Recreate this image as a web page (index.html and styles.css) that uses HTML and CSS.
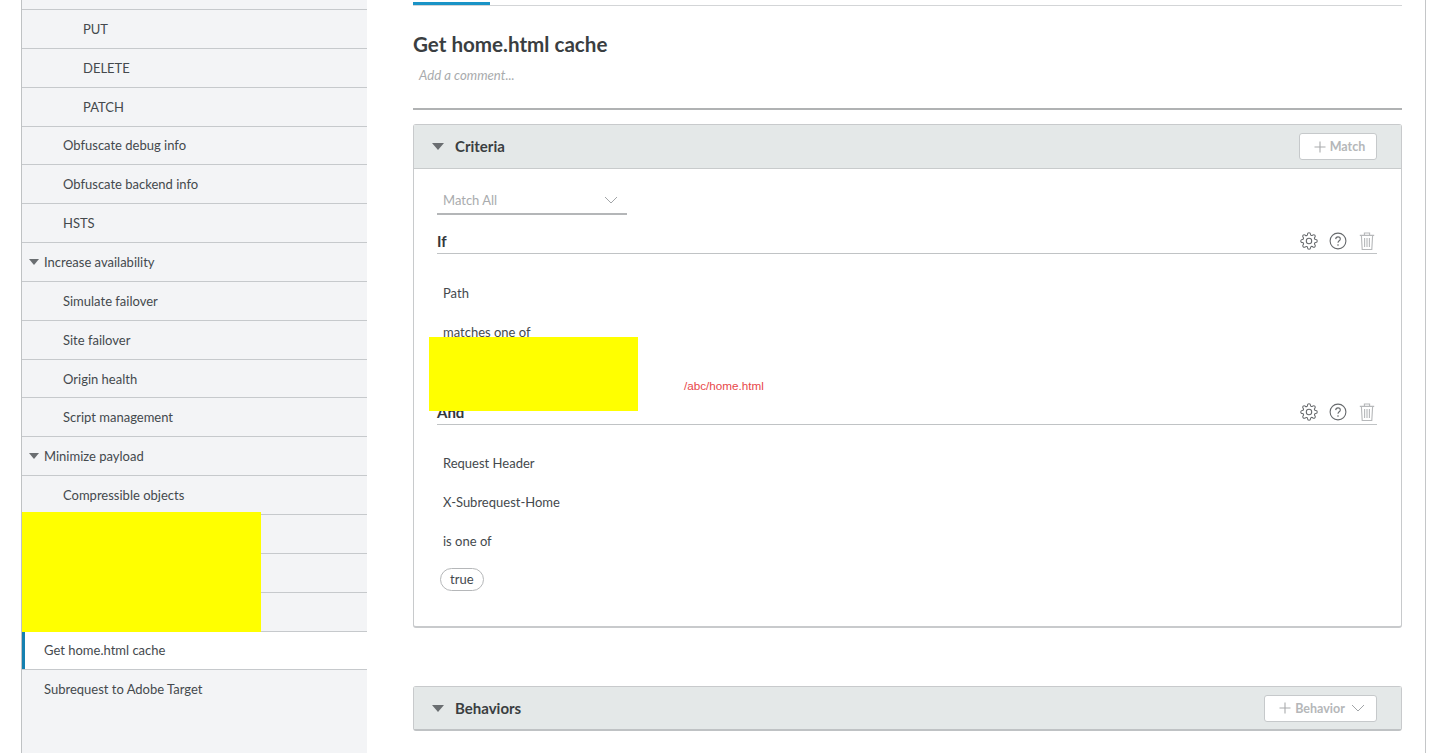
FILE: index.html
```html
<!DOCTYPE html>
<html lang="en">
<head>
<meta charset="utf-8">
<title>Get home.html cache</title>
<link rel="stylesheet" href="styles.css">
</head>
<body>
<svg class="sprite" width="0" height="0" aria-hidden="true">
  <symbol id="gear" viewBox="0 0 24 24"><circle cx="12" cy="12" r="3.6" fill="none" stroke="currentColor" stroke-width="1.4"/><path d="M19.4 15a1.65 1.65 0 0 0 .33 1.82l.06.06a2 2 0 0 1 0 2.83 2 2 0 0 1-2.83 0l-.06-.06a1.65 1.65 0 0 0-1.82-.33 1.65 1.65 0 0 0-1 1.51V21a2 2 0 0 1-2 2 2 2 0 0 1-2-2v-.09A1.65 1.65 0 0 0 9 19.4a1.65 1.65 0 0 0-1.82.33l-.06.06a2 2 0 0 1-2.83 0 2 2 0 0 1 0-2.83l.06-.06a1.65 1.65 0 0 0 .33-1.82 1.65 1.65 0 0 0-1.51-1H3a2 2 0 0 1-2-2 2 2 0 0 1 2-2h.09A1.65 1.65 0 0 0 4.6 9a1.65 1.65 0 0 0-.33-1.82l-.06-.06a2 2 0 0 1 0-2.83 2 2 0 0 1 2.83 0l.06.06a1.65 1.65 0 0 0 1.82.33H9a1.65 1.65 0 0 0 1-1.51V3a2 2 0 0 1 2-2 2 2 0 0 1 2 2v.09a1.65 1.65 0 0 0 1 1.51 1.65 1.65 0 0 0 1.82-.33l.06-.06a2 2 0 0 1 2.83 0 2 2 0 0 1 0 2.83l-.06.06a1.65 1.65 0 0 0-.33 1.82V9a1.65 1.65 0 0 0 1.51 1H21a2 2 0 0 1 2 2 2 2 0 0 1-2 2h-.09a1.65 1.65 0 0 0-1.51 1z" fill="none" stroke="currentColor" stroke-width="1.4" stroke-linejoin="round"/></symbol>
  <symbol id="help" viewBox="0 0 18 18"><circle cx="9" cy="9" r="7.9" fill="none" stroke="currentColor" stroke-width="1.1"/><path d="M6.7 7.1C6.8 5.6 7.8 4.9 9 4.9c1.3 0 2.3.8 2.3 2 0 1.8-2.3 1.9-2.3 3.8" fill="none" stroke="currentColor" stroke-width="1.1"/><circle cx="9" cy="13" r=".8" fill="currentColor"/></symbol>
  <symbol id="trash" viewBox="0 0 18 18"><path d="M1.8 3.4h14.4M6.4 3.2V1h5.2v2.2M3.4 3.6l.8 13.9h9.6l.8-13.9M6.6 6v9M9 6v9M11.4 6v9" fill="none" stroke="currentColor" stroke-width="1.1"/></symbol>
  <symbol id="chev" viewBox="0 0 14 8"><path d="M1 1l6 6 6-6" fill="none" stroke="currentColor" stroke-width="1"/></symbol>
  <symbol id="plus" viewBox="0 0 12 12"><path d="M6 .5v11M.5 6h11" fill="none" stroke="currentColor" stroke-width="1.1"/></symbol>
</svg>

<div class="shell">
  <nav class="sidebar">
    <div class="row row-cut"></div>
    <div class="row lvl3">PUT</div>
    <div class="row lvl3">DELETE</div>
    <div class="row lvl3">PATCH</div>
    <div class="row lvl2">Obfuscate debug info</div>
    <div class="row lvl2">Obfuscate backend info</div>
    <div class="row lvl2">HSTS</div>
    <div class="row lvl1"><span class="tri"></span>Increase availability</div>
    <div class="row lvl2">Simulate failover</div>
    <div class="row lvl2">Site failover</div>
    <div class="row lvl2">Origin health</div>
    <div class="row lvl2">Script management</div>
    <div class="row lvl1"><span class="tri"></span>Minimize payload</div>
    <div class="row lvl2">Compressible objects</div>
    <div class="row"></div>
    <div class="row"></div>
    <div class="row"></div>
    <div class="row lvl0 active">Get home.html cache</div>
    <div class="row lvl0 last">Subrequest to Adobe Target</div>
  </nav>

  <main class="main">
    <div class="tabs"><span class="tab-active"></span></div>
    <h1 class="title">Get home.html cache</h1>
    <p class="comment">Add a comment...</p>

    <section class="card criteria">
      <header class="card-head">
        <span class="tri tri-lg"></span>
        <h2 class="card-title">Criteria</h2>
        <button class="btn"><svg class="i-plus"><use href="#plus"/></svg>Match</button>
      </header>
      <div class="card-body">
        <div class="select">Match All<svg class="i-chev"><use href="#chev"/></svg></div>

        <div class="cond-head">
          <strong>If</strong>
          <span class="tools">
            <svg class="i-tool"><use href="#gear"/></svg>
            <svg class="i-tool"><use href="#help"/></svg>
            <svg class="i-tool faint"><use href="#trash"/></svg>
          </span>
        </div>
        <div class="line first">Path</div>
        <div class="line">matches one of</div>
        <div class="line"></div>

        <div class="cond-head cond-and">
          <strong>And</strong>
          <span class="tools">
            <svg class="i-tool"><use href="#gear"/></svg>
            <svg class="i-tool"><use href="#help"/></svg>
            <svg class="i-tool faint"><use href="#trash"/></svg>
          </span>
        </div>
        <div class="line first">Request Header</div>
        <div class="line">X-Subrequest-Home</div>
        <div class="line">is one of</div>
        <div class="line"><span class="pill">true</span></div>
      </div>
    </section>

    <section class="card behaviors">
      <header class="card-head">
        <span class="tri tri-lg"></span>
        <h2 class="card-title">Behaviors</h2>
        <button class="btn btn-menu"><svg class="i-plus"><use href="#plus"/></svg>Behavior<svg class="i-chev"><use href="#chev"/></svg></button>
      </header>
    </section>
  </main>
</div>

<div class="redact redact-side"></div>
<div class="redact redact-main"></div>
<span class="annotation">/abc/home.html</span>
</body>
</html>
```

FILE: styles.css
```css
* { box-sizing: border-box; }

html, body {
  margin: 0;
  height: 753px;
  overflow: hidden;
  background: #fff;
}

body {
  font-family: Lato, "Liberation Sans", sans-serif;
  font-size: 13px;
  color: #44494d;
  position: relative;
}

.sprite { position: absolute; }

.shell {
  display: flex;
  width: 1405px;
  height: 753px;
  margin-left: 21px;
  border-left: 1px solid #bfc2c4;
  border-right: 1px solid #c4c6c8;
}

/* Sidebar */
.sidebar {
  width: 345px;
  flex: none;
  background: #f3f4f6;
}

.row {
  display: flex;
  align-items: center;
  height: 38.85px;
  border-bottom: 1px solid #c6c9cc;
}

.row-cut { height: 10px; }
.lvl0 { padding-left: 22px; }
.lvl1 { padding-left: 7px; }
.lvl2 { padding-left: 41px; }
.lvl3 { padding-left: 61px; }

.active {
  background: #fff;
  box-shadow: inset 3px 0 0 #1580b0;
}

.last {
  padding-bottom: 2px;
  border-bottom: none;
}

.tri {
  width: 0;
  height: 0;
  margin-right: 5px;
  border-left: 5px solid transparent;
  border-right: 5px solid transparent;
  border-top: 6px solid #6a6e71;
}

/* Main */
.main {
  flex: 1;
  min-width: 0;
  padding: 0 23px 0 46px;
}

.tabs {
  height: 6px;
  padding-top: 2px;
  border-bottom: 1px solid #d3d5d7;
}

.tab-active {
  display: block;
  width: 77px;
  height: 3px;
  background: #1a93c6;
}

.title {
  margin: 23px 0 0;
  height: 30px;
  font-size: 20.6px;
  line-height: 30px;
  font-weight: 700;
  color: #3a3e41;
}

.comment {
  margin: 6px 0 0;
  height: 45px;
  border-bottom: 2px solid #b0b2b3;
  text-indent: 6px;
  font-size: 13.2px;
  line-height: 20px;
  font-style: italic;
  color: #a9abad;
}

.card {
  border: 1px solid #c8cacc;
  border-radius: 3px;
}

.criteria {
  margin-top: 14px;
  height: 504px;
  border-width: 1px 1px 2px;
}

.behaviors {
  margin-top: 58px;
  border-bottom-width: 2px;
  border-bottom-color: #bfc2c4;
}

.card-head {
  display: flex;
  align-items: center;
  height: 44px;
  padding: 0 24px 0 18px;
  background: #e4e8e8;
  border-bottom: 1px solid #c8cbcc;
}

.behaviors .card-head { height: 42px; border-bottom: none; }

.tri-lg {
  margin-right: 11px;
  border-left-width: 6px;
  border-right-width: 6px;
  border-top-width: 7px;
}

.card-title {
  flex: 1;
  margin: 0;
  padding-bottom: 1px;
  font-size: 15px;
  font-weight: 700;
  color: #3a3e41;
}

.btn {
  display: flex;
  align-items: center;
  justify-content: center;
  gap: 4px;
  width: 78px;
  height: 27px;
  padding: 0 0 0 3px;
  background: #fff;
  border: 1px solid #c6c9cb;
  border-radius: 3px;
  font: 700 12.5px Lato, "Liberation Sans", sans-serif;
  color: #b5b7b9;
}

.btn-menu { width: 113px; }

.i-plus { width: 12px; height: 12px; color: #a9abad; }
.i-chev { width: 14px; height: 8px; color: #a2a5a8; }
.btn .i-chev { margin-left: 2px; }

.card-body { padding: 17px 24px 0 23px; }

.select {
  display: flex;
  align-items: center;
  justify-content: space-between;
  width: 190px;
  height: 29px;
  padding: 0 9px 0 6px;
  border-bottom: 2px solid #b4b6b8;
  color: #a9abad;
}

.cond-head {
  display: flex;
  align-items: flex-end;
  justify-content: space-between;
  height: 39px;
  padding-bottom: 3px;
  border-bottom: 1px solid #c0c3c5;
}

.cond-head strong {
  font-size: 15px;
  line-height: 18px;
  font-weight: 700;
  color: #33373a;
}

.cond-and { height: 34px; }

.tools {
  display: flex;
  gap: 11px;
  padding-right: 1px;
  color: #66696c;
}

.i-tool { width: 18px; height: 18px; }
.faint { color: #b6b8ba; }

.line {
  display: flex;
  align-items: center;
  height: 38.85px;
  padding-left: 6px;
}

.line.first { margin-top: 20px; }
.cond-and + .line.first { margin-top: 19px; }

.pill {
  margin-left: -3px;
  padding: 0 9px;
  height: 23px;
  line-height: 21px;
  border: 1px solid #b5b7b9;
  border-radius: 12px;
}

/* Overlays that lie on top of the page */
.redact {
  position: absolute;
  background: #ff0;
}

.redact-side { left: 22px; top: 512px; width: 239px; height: 120px; }
.redact-main { left: 429px; top: 337px; width: 209px; height: 74px; }

.annotation {
  position: absolute;
  left: 684px;
  top: 378px;
  font: 11.7px/15px "Liberation Sans", sans-serif;
  color: #e8474a;
}
```
